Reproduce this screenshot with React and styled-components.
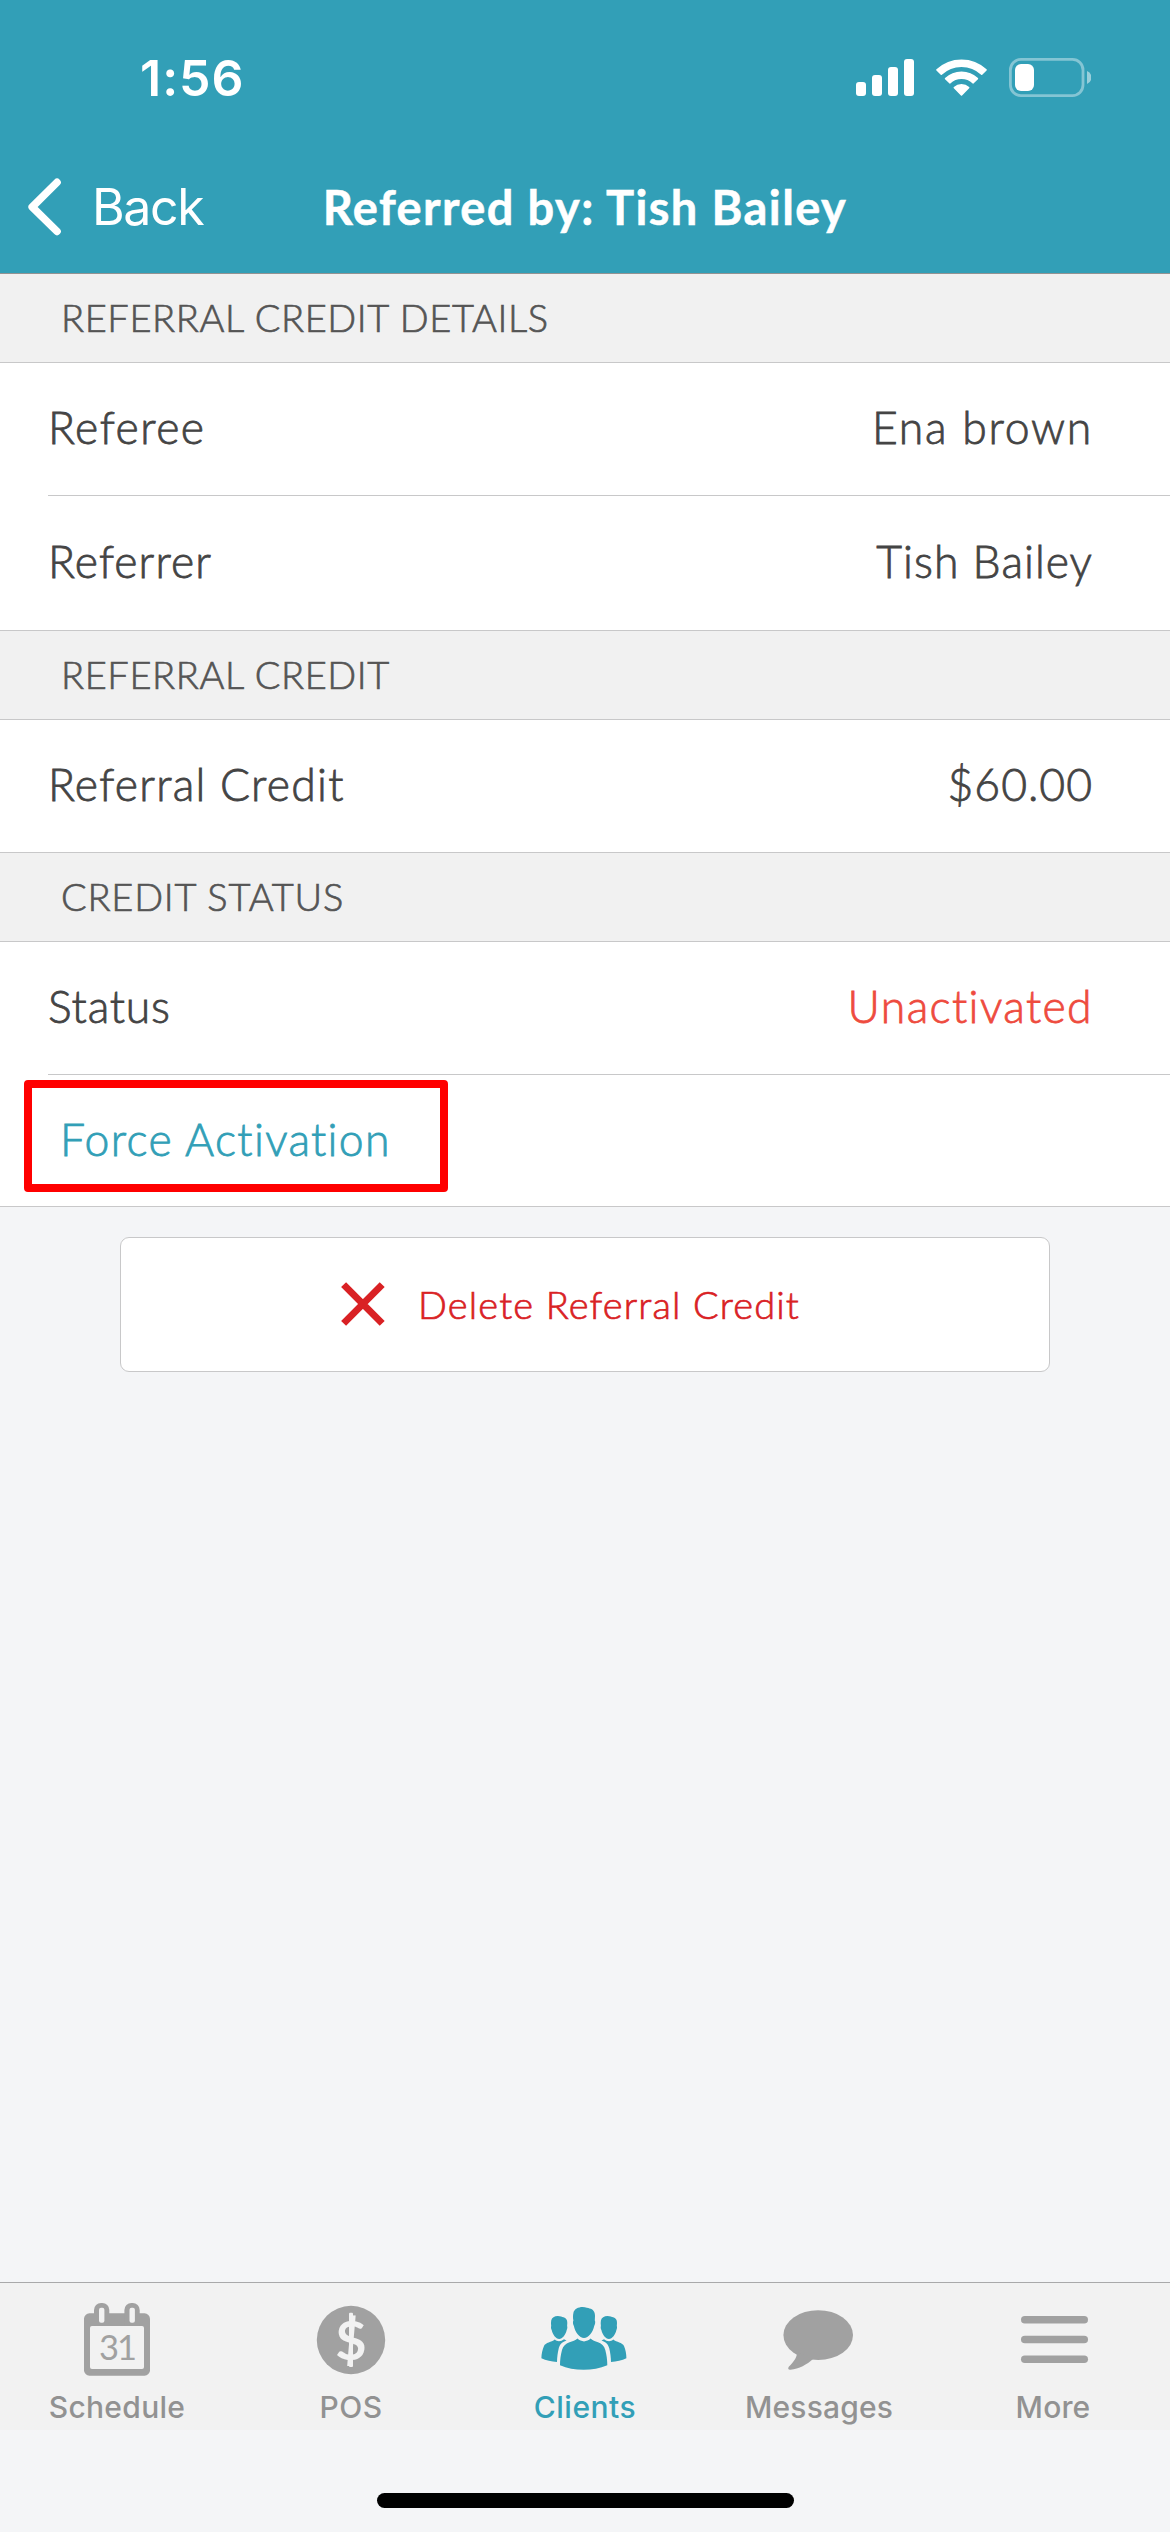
import React from 'react';
import styled, { createGlobalStyle } from 'styled-components';

const color = {
  brand: '#329fb7',
  line: '#c8c8c9',
  text: '#444444',
  heading: '#555555',
  muted: '#929292',
  icon: '#a1a1a1',
  page: '#f4f5f7',
  bar: '#f2f2f2',
  danger: '#d92124',
  warning: '#ee4b3e',
};

const GlobalStyle = createGlobalStyle`
  *, *::before, *::after { box-sizing: border-box; }
  body {
    margin: 0;
    background: ${color.page};
    font-family: Lato, "Open Sans", sans-serif;
  }
`;

const Screen = styled.div`
  display: flex;
  flex-direction: column;
  width: 1170px;
  height: 2532px;
  overflow: hidden;
  background: ${color.page};
`;

const Header = styled.header`
  display: flex;
  flex-direction: column;
  height: 274px;
  background: ${color.brand};
  border-bottom: 1px solid #939393;
  color: #fff;
`;

const StatusBar = styled.div`
  display: flex;
  align-items: center;
  justify-content: space-between;
  height: 141px;
  padding: 14px 79px 0 140px;
`;

const Clock = styled.span`
  font: 600 50px/60px Inter, sans-serif;
  letter-spacing: 1px;
`;

const StatusIcons = styled.div`
  display: flex;
  align-items: center;
  gap: 22px;

  svg { display: block; }
`;

const NavBar = styled.nav`
  display: grid;
  grid-template-columns: 1fr auto 1fr;
  align-items: center;
  height: 132px;
`;

const BackButton = styled.button`
  display: flex;
  align-items: center;
  gap: 30px;
  padding: 0 0 0 28px;
  border: 0;
  background: none;
  color: inherit;
  font: 400 50px/60px Inter, sans-serif;
  letter-spacing: -1.4px;

  svg { display: block; }
`;

const Title = styled.h1`
  margin: 0;
  font-size: 47px;
  font-weight: 700;
  line-height: 60px;
  letter-spacing: 1.4px;
  white-space: nowrap;
  -webkit-text-stroke: 0.5px #fff;
`;

const Content = styled.main`
  display: flex;
  flex: 1;
  flex-direction: column;
`;

const SectionTitle = styled.h2`
  display: flex;
  align-items: center;
  height: 89px;
  margin: 0;
  padding: 0 0 2px 61px;
  border-bottom: 1px solid ${color.line};
  background: #f1f1f1;
  color: ${color.heading};
  font-size: 38px;
  font-weight: 300;
  letter-spacing: ${(p) => p.$track}px;
  -webkit-text-stroke: 0.7px ${color.heading};
`;

const List = styled.section`
  display: flex;
  flex-direction: column;
  border-bottom: 1px solid ${color.line};
  background: #fff;
`;

const Row = styled.div`
  display: flex;
  align-items: center;
  justify-content: space-between;
  height: ${(p) => p.$height || 132}px;
  margin-left: 48px;
  padding: 0 77px 5px 0;

  & + & { border-top: 1px solid ${color.line}; }
`;

const RowText = styled.span`
  color: ${(p) => p.$color || color.text};
  font-size: 44.5px;
  font-weight: 300;
  letter-spacing: ${(p) => p.$track}px;
  -webkit-text-stroke: 0.8px ${(p) => p.$color || color.text};
  white-space: nowrap;
`;

const LinkRow = styled(Row)`
  position: relative;
  padding-left: 12px;
`;

const Highlight = styled.div`
  position: absolute;
  top: 5px;
  left: -24px;
  width: 424px;
  height: 112px;
  border: 8px solid #ff0000;
  border-radius: 4px;
`;

const DeleteButton = styled.button`
  display: flex;
  align-items: center;
  gap: 33px;
  width: 930px;
  height: 135px;
  margin: 30px 120px 0;
  padding: 0 0 1px 220px;
  border: 1px solid ${color.line};
  border-radius: 9px;
  background: #fff;
  color: ${color.danger};
  font: 300 38px/46px Lato, sans-serif;
  letter-spacing: 1.14px;
  -webkit-text-stroke: 0.7px ${color.danger};

  svg { display: block; }
`;

const TabBar = styled.nav`
  display: grid;
  grid-template-columns: repeat(5, 1fr);
  height: 148px;
  border-top: 1px solid #a9a9aa;
  background: ${color.bar};
`;

const Tab = styled.div`
  display: flex;
  flex-direction: column;
  align-items: center;
  padding-top: 17px;
  color: ${(p) => (p.$active ? color.brand : color.icon)};

  svg { display: block; }
`;

const TabLabel = styled.span`
  margin-top: 9px;
  color: ${(p) => (p.$active ? color.brand : color.muted)};
  font: 500 30px/36px Inter, sans-serif;
  letter-spacing: ${(p) => p.$track}px;
`;

const SafeArea = styled.div`
  display: flex;
  justify-content: center;
  height: 102px;
  padding-top: 63px;
`;

const HomeIndicator = styled.div`
  width: 417px;
  height: 15px;
  border-radius: 8px;
  background: #000;
`;

const SignalIcon = () => (
  <svg width="58" height="37" viewBox="0 0 58 37" fill="#fff">
    <rect x="0" y="23" width="10" height="14" rx="3" />
    <rect x="16" y="16" width="10" height="21" rx="3" />
    <rect x="32" y="8" width="10" height="29" rx="3" />
    <rect x="48" y="0" width="10" height="37" rx="3" />
  </svg>
);

const WifiIcon = () => (
  <svg width="51" height="37" viewBox="0 0 51 37" fill="#fff" stroke="#fff" strokeWidth="1.6" strokeLinejoin="round">
    <path d="M1 10.9 A36 36 0 0 1 50 10.9 L45.7 15.2 A29.5 29.5 0 0 0 5.3 15.2 Z" />
    <path d="M9.6 19.6 A23 23 0 0 1 41.4 19.6 L37.2 23.8 A17.3 17.3 0 0 0 13.8 23.8 Z" />
    <path d="M18.4 28.6 A10.5 10.5 0 0 1 32.6 28.6 L25.5 36 Z" />
  </svg>
);

const BatteryIcon = () => (
  <svg width="82" height="39" viewBox="0 0 82 39">
    <rect x="1.4" y="1.4" width="72.6" height="36.2" rx="10.5" fill="none" stroke="#fff" strokeOpacity="0.4" strokeWidth="2.8" />
    <rect x="6" y="6" width="19" height="27" rx="6" fill="#fff" />
    <path d="M78 13 A7 7 0 0 1 78 26 Z" fill="#fff" fillOpacity="0.5" />
  </svg>
);

const ChevronIcon = () => (
  <svg width="34" height="58" viewBox="0 0 34 58" fill="none" stroke="#fff" strokeWidth="7.6" strokeLinecap="round" strokeLinejoin="round">
    <path d="M29 4.4 L4.2 29 L29 53.4" />
  </svg>
);

const CrossIcon = () => (
  <svg width="44" height="44" viewBox="0 0 44 44" fill="none" stroke={color.danger} strokeWidth="7">
    <path d="M2.6 2.6 L41.2 41.4 M41.2 2.6 L2.6 41.4" />
  </svg>
);

const ScheduleIcon = () => (
  <svg width="90" height="80" viewBox="0 0 90 80" fill="currentColor">
    <rect x="12" y="13.3" width="66" height="62.4" rx="5.5" />
    <rect x="22" y="3" width="15.3" height="26" rx="7" />
    <rect x="52.4" y="3" width="15.3" height="26" rx="7" />
    <rect x="27" y="7.8" width="5.4" height="15" rx="2" fill={color.bar} />
    <rect x="57.5" y="7.8" width="5.4" height="15" rx="2" fill={color.bar} />
    <rect x="18" y="26" width="54" height="43" rx="2" fill={color.bar} />
    <text x="46" y="60" textAnchor="middle" fontFamily="Lato, sans-serif" fontSize="34.5" fontWeight="400" textLength="38">31</text>
  </svg>
);

const PosIcon = () => (
  <svg width="90" height="80" viewBox="0 0 90 80" fill="currentColor">
    <circle cx="45" cy="40" r="34.2" />
    <text x="45" y="59.5" textAnchor="middle" fontFamily="Lato, sans-serif" fontSize="54" fontWeight="700" fill={color.bar}>$</text>
    <rect x="43" y="12.8" width="4" height="54.2" rx="1" fill={color.bar} />
  </svg>
);

const ClientsIcon = () => (
  <svg width="90" height="80" viewBox="0 0 90 80" fill="currentColor">
    <path d="M33.4 13 C34 9 38.5 7 42.5 7 C46 7.2 48 8 49.5 8.6 C53 9.2 55.2 12 55 16 L54.8 20.6 C55.6 21.5 55.2 24.5 54.2 26 C53 32 48.5 38 44 38 C39.5 38 35 32 33.9 26 C32.8 24.5 32.7 21.5 33.4 20.6 C32.8 18 32.9 15 33.4 13 Z" />
    <path d="M37.5 38.6 C41 42.3 47 42.3 50.6 38.6 C52.5 40.5 55 41.3 58 42.2 C62 43.5 64.2 46 65.3 50 C66.6 55 67.3 60 67.3 65.3 C60 68.5 52 69.8 43.7 69.8 C35 69.8 27 68.5 20 65.3 C20 60 20.7 55 22 50 C23.2 46 25.5 43.5 29.5 42.2 C32.5 41.3 35.5 40.5 37.5 38.6 Z" />
    <path d="M11.2 20.5 C11.8 17.5 14.5 16 17.8 16 C20.5 16 22 17 23.5 17.3 C26 17.8 27.4 20 27.3 23 L27.1 26 C27.6 27 27.3 29 26.7 30 C25.8 34.5 22.5 38.9 19.2 38.9 C15.9 38.9 12.6 34.5 11.7 30 C11 29 10.8 27 11.2 26 C10.9 24 10.9 22.5 11.2 20.5 Z" />
    <path d="M60.9 20.5 C61.5 17.5 64.2 16 67.5 16 C70.2 16 71.7 17 73.2 17.3 C75.7 17.8 77.1 20 77 23 L76.8 26 C77.3 27 77 29 76.4 30 C75.5 34.5 72.2 38.9 68.9 38.9 C65.6 38.9 62.3 34.5 61.4 30 C60.7 29 60.5 27 60.9 26 C60.6 24 60.6 22.5 60.9 20.5 Z" />
    <path d="M14.8 39.5 C17 41.8 21 41.8 24 39.3 L26.5 40.5 C21.5 42 19.6 45 18.7 48.5 C17.7 53 17.1 57 17 62 C11.5 61.6 6 60.3 1.4 58.2 C1.4 54 2.5 49.5 4 46 C5.5 42.5 11.5 42.2 14.8 39.5 Z" />
    <path d="M73.3 39.5 C71 41.8 67 41.8 64 39.3 L61.5 40.5 C66.5 42 68.4 45 69.3 48.5 C70.3 53 70.9 57 71 62 C76.5 61.6 82 60.3 86.4 58.2 C86.4 54 85.5 49.5 84 46 C82.5 42.5 76.5 42.2 73.3 39.5 Z" />
  </svg>
);

const MessagesIcon = () => (
  <svg width="90" height="80" viewBox="0 0 90 80" fill="currentColor">
    <ellipse cx="44.2" cy="35.1" rx="34.8" ry="24.9" />
    <path d="M22.5 52 C24 56 20 61.5 15 66.6 C13.5 68.6 14.2 70 16.5 69.8 C25 69 33 64.5 39 59 Z" />
  </svg>
);

const MoreIcon = () => (
  <svg width="90" height="80" viewBox="0 0 90 80" fill="currentColor">
    <rect x="13" y="16" width="67" height="7.5" rx="3.75" />
    <rect x="13" y="35.8" width="67" height="7.5" rx="3.75" />
    <rect x="13" y="55.6" width="67" height="7.5" rx="3.75" />
  </svg>
);

const tabs = [
  { label: 'Schedule', icon: ScheduleIcon, track: 0.3 },
  { label: 'POS', icon: PosIcon, track: 0.5 },
  { label: 'Clients', icon: ClientsIcon, track: 0.5, active: true },
  { label: 'Messages', icon: MessagesIcon, track: 0.16 },
  { label: 'More', icon: MoreIcon, track: 0.16 },
];

export default function App() {
  return (
    <Screen>
      <GlobalStyle />
      <Header>
        <StatusBar>
          <Clock>1:56</Clock>
          <StatusIcons>
            <SignalIcon />
            <WifiIcon />
            <BatteryIcon />
          </StatusIcons>
        </StatusBar>
        <NavBar>
          <BackButton>
            <ChevronIcon />
            Back
          </BackButton>
          <Title>Referred by: Tish Bailey</Title>
        </NavBar>
      </Header>

      <Content>
        <SectionTitle $track={0.62}>REFERRAL CREDIT DETAILS</SectionTitle>
        <List>
          <Row>
            <RowText $track={1.5}>Referee</RowText>
            <RowText $track={1.75}>Ena brown</RowText>
          </Row>
          <Row $height={135}>
            <RowText $track={1.1}>Referrer</RowText>
            <RowText $track={1.05}>Tish Bailey</RowText>
          </Row>
        </List>

        <SectionTitle $track={0.62}>REFERRAL CREDIT</SectionTitle>
        <List>
          <Row>
            <RowText $track={1.26}>Referral Credit</RowText>
            <RowText $track={1.0}>$60.00</RowText>
          </Row>
        </List>

        <SectionTitle $track={0.8}>CREDIT STATUS</SectionTitle>
        <List>
          <Row>
            <RowText $track={0.8}>Status</RowText>
            <RowText $track={1.4} $color={color.warning}>Unactivated</RowText>
          </Row>
          <LinkRow>
            <RowText $track={1.35} $color={color.brand}>Force Activation</RowText>
            <Highlight />
          </LinkRow>
        </List>

        <DeleteButton>
          <CrossIcon />
          Delete Referral Credit
        </DeleteButton>
      </Content>

      <TabBar>
        {tabs.map(({ label, icon: Icon, track, active }) => (
          <Tab key={label} $active={active}>
            <Icon />
            <TabLabel $active={active} $track={track}>{label}</TabLabel>
          </Tab>
        ))}
      </TabBar>
      <SafeArea>
        <HomeIndicator />
      </SafeArea>
    </Screen>
  );
}
